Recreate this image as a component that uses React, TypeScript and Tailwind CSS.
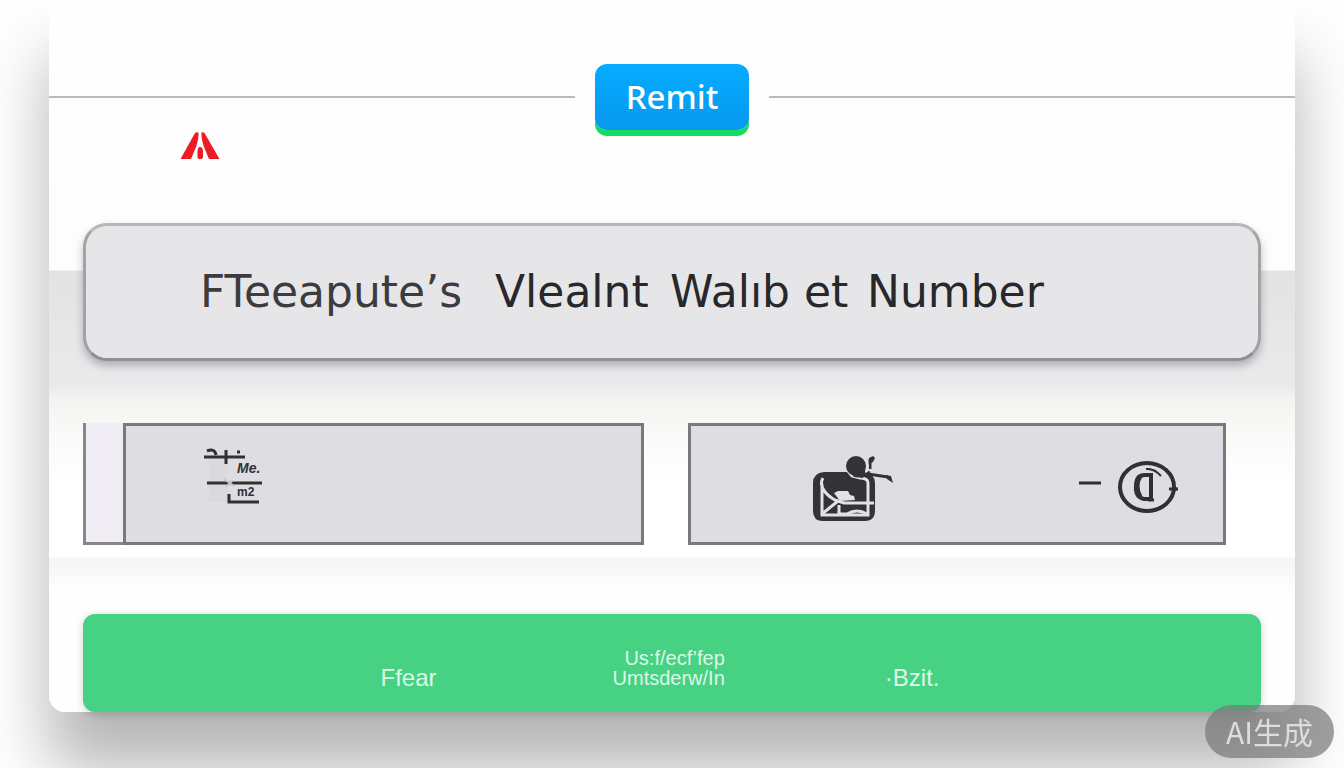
import React from 'react';

const WarningMark: React.FC = () => (
  <svg width="40" height="28" viewBox="0 0 40 28" fill="#ed1c24" aria-hidden="true">
    <path d="M15 1Q16 0 18.500 0.500Q19 6 16 15L11 27H0.500Z" />
    <path d="M21.500 0.500Q23 0 24.500 1L39.500 27H29L24 15Q21 6 21.500 0.500Z" />
    <path d="M17.500 20Q17.500 15 20 15Q23 15 23 20V25Q23 27 21 27H19Q17.500 27 17.500 25Z" />
  </svg>
);

const NoteIcon: React.FC = () => (
  <svg width="60" height="80" viewBox="0 0 60 80" fill="none" stroke="#303033" strokeWidth="3" aria-hidden="true">
    <path d="M5 14H24V58H5Z" fill="#d6d5da" stroke="none" opacity="0.5" />
    <path d="M0 13H41M3 7Q11 4 12 11M22 6V20M33 8H36M3 39H58" />
    <path d="M20 35L30 42M22 43L29 36" stroke="#c8c6c9" strokeWidth="2" />
    <path d="M25 50V58H55" />
    <text x="33" y="29" fill="#303033" stroke="none" className="text-[14px] font-black italic">Me.</text>
    <text x="33" y="52" fill="#303033" stroke="none" className="text-[12px] font-black">m2</text>
  </svg>
);

const WalletIcon: React.FC = () => (
  <svg width="84" height="80" viewBox="0 0 84 80" fill="none" aria-hidden="true">
    <path d="M12 28H36V24H53V29Q63 30 63 39V66Q63 77 53 77H11Q1 77 1 67V39Q1 29 12 28Z" fill="#333336" />
    <path d="M11 34C6 42 14 51 23 56L32 59H62M10 40V71H56V39Q56 34 48 34L40 32L36 27M10 70L26 57" stroke="#e3e1e5" strokeWidth="3" />
    <path d="M22 49L26 47H36L38 51L42 52L43 56L28 57Z" fill="#e3e1e5" />
    <path d="M16 57L13 62L19 57Z" fill="#333336" />
    <path d="M27 61V70H35Q45 64 55 70" stroke="#e3e1e5" strokeWidth="3" />
    <ellipse cx="44" cy="22" rx="10" ry="10" fill="#333336" />
    <path d="M39 29H53L51 34L42 33Z" fill="#333336" />
    <path d="M50 32L58 28M58 25V15M56 30L76 33" stroke="#333336" strokeWidth="3" />
    <path d="M57 14L61 12L63 14L61 18L57 20ZM74 31L79 32L81 39L75 35Z" fill="#333336" />
    <path d="M54 16Q58 24 54 28" stroke="#e3e1e5" strokeWidth="2" />
  </svg>
);

const CoinIcon: React.FC = () => (
  <svg width="100" height="80" viewBox="0 0 100 80" fill="none" stroke="#303033" aria-hidden="true">
    <path d="M0 39H22" strokeWidth="3" />
    <ellipse cx="68" cy="43" rx="27" ry="24" strokeWidth="4" />
    <path d="M72 31V55H65Q56 53 57 42Q57 31 66 31Z" strokeWidth="4" />
    <path d="M61 32Q55 42 61 53" strokeWidth="5" />
    <path d="M69 56H75" strokeWidth="3" />
    <path d="M67 25Q75 24 82 32M70 25L77 27" strokeWidth="2" />
    <path d="M90 45H99M96 43V47" strokeWidth="3" />
  </svg>
);

const actionClass = 'text-left text-2xl leading-5 text-[#ddf8e8]';

export default function App() {
  return (
    <div className="min-h-screen overflow-hidden bg-[#fefefe] px-[49px] font-['Liberation_Sans',sans-serif] text-[#28282b]">
      <main className="rounded-b-2xl bg-[linear-gradient(to_bottom,#fefefe_0px,#fdfdfd_270px,#e3e3e4_271px,#eaeaec_385px,#f4f3f2_400px,#f9f9f8_430px,#ffffff_485px,#ffffff_557px,#f5f5f5_558px,#fefefe_590px)] shadow-[0_56px_64px_rgba(0,0,0,0.29)]">
        <header className="flex items-center gap-5 pt-16">
          <div className="h-0.5 flex-1 bg-[#bcb9ba]"></div>
          <button
            type="button"
            className="h-[66px] w-[154px] rounded-xl bg-linear-to-b from-[#05acff] to-[#0798ee] font-['Noto_Sans',sans-serif] text-[33px] font-medium text-white shadow-[0_6px_0_#14dc61]"
          >
            Remit
          </button>
          <div className="h-0.5 flex-1 bg-[#bcb9ba]"></div>
        </header>

        <div className="pt-0.5 pl-[131px]">
          <WarningMark />
        </div>

        {/* Wallet number */}
        <section className="mx-[34px] mt-[63px] flex h-[138px] items-center rounded-3xl border-3 border-[#a3a2a5] border-t-[#b7b6b8] border-b-[#918f94] bg-[#e6e6e9] pl-[114px] shadow-[0_5px_8px_rgba(50,45,60,0.3)]">
          <h1 className="flex font-['DejaVu_Sans',sans-serif] text-[44px] whitespace-nowrap">
            <span className="w-[295px] text-[#3c3c3f]">FTeeapute’s</span>
            <span className="w-[175px]">Vlealnt</span>
            <span className="w-[197px]">Walıb et</span>
            <span>Number</span>
          </h1>
        </section>

        <section className="mt-[62px] grid grid-cols-[560fr_537fr] gap-11 pr-[69px] pl-[34px]">
          <div className="flex h-[122px]">
            <div className="w-10 border-b-3 border-l-3 border-[#88868b] bg-[#f0eef4]"></div>
            <div className="flex flex-1 items-center border-3 border-[#79787c] bg-[#dedde2] pl-[78px]">
              <NoteIcon />
            </div>
          </div>
          <div className="flex h-[122px] items-center justify-between border-3 border-[#79787c] bg-[#dedde2] pr-11 pl-[121px]">
            <WalletIcon />
            <CoinIcon />
          </div>
        </section>

        {/* Actions */}
        <footer className="mx-[34px] mt-[69px] flex h-[98px] items-end justify-center gap-40 rounded-xl bg-[#46d282] pr-6 pb-6 shadow-[0_2px_8px_rgba(0,0,0,0.18)]">
          <button type="button" className={actionClass}>Ffear</button>
          <button type="button" className="flex flex-col pl-4 text-xl leading-5 text-[#ddf8e8]">
            <span className="self-end">Us:f/ecf’fep</span>
            <span>Umtsderw/In</span>
          </button>
          <button type="button" className={actionClass}>·Bzit.</button>
        </footer>
      </main>

      <div className="fixed right-2.5 bottom-2.5 flex h-[53px] w-[129px] items-center justify-center rounded-full bg-[#777777]/70 font-['Noto_Sans_CJK_SC',sans-serif] text-[30px] text-[#dddddd]">
        AI生成
      </div>
    </div>
  );
}
